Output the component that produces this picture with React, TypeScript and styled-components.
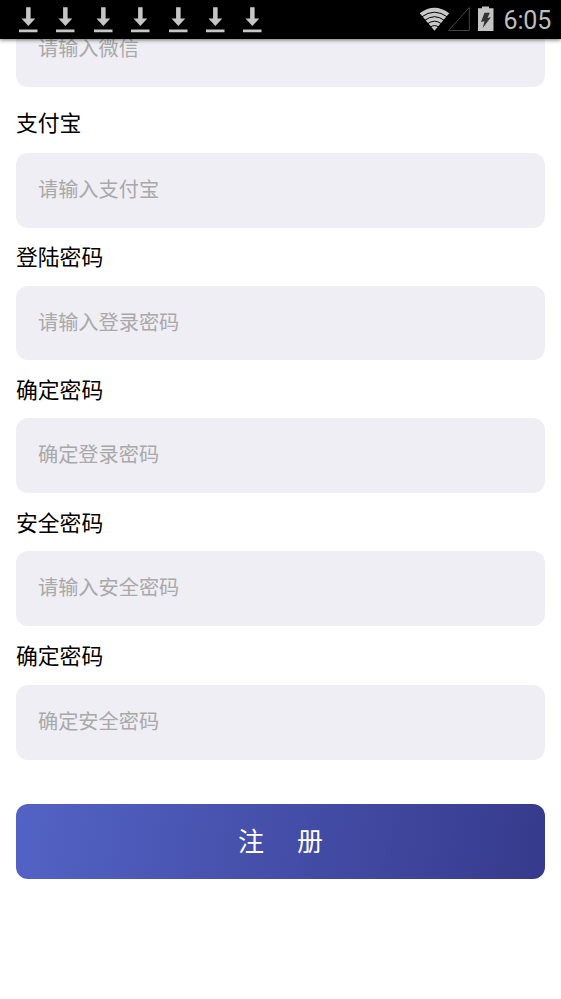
import React from "react";
import styled, { createGlobalStyle } from "styled-components";

const GlobalStyle = createGlobalStyle`
  *, *::before, *::after { box-sizing: border-box; }
  html, body { margin: 0; padding: 0; background: #fff; overflow: hidden; }
  body { font-family: Roboto, "Noto Sans CJK SC", sans-serif; }
`;

const Screen = styled.div`
  width: 561px;
  height: 999px;
  display: flex;
  flex-direction: column;
  overflow: hidden;
  background: #fff;
`;

const StatusBar = styled.header`
  flex: none;
  height: 39px;
  display: flex;
  justify-content: space-between;
  background: #000;
  color: #bebebe;
  box-shadow: 0 1px 4px rgba(0, 0, 0, 0.55);
  z-index: 1;
`;

const Downloads = styled.div`
  display: flex;
  padding: 6px 0 0 18px;
  gap: 17.4px;
`;

const DownloadIcon = styled.svg`
  display: block;
  width: 20px;
  height: 27px;
`;

const SystemIcons = styled.div`
  display: flex;
  padding-right: 10px;
`;

const StatusGlyphs = styled.svg`
  display: block;
  width: 80px;
  height: 39px;
`;

const Clock = styled.time`
  width: 51px;
  font-size: 25px;
  line-height: 41px;
  letter-spacing: -0.2px;
  text-align: right;
  white-space: nowrap;
`;

const Form = styled.main`
  flex: 1;
  min-height: 0;
  overflow: hidden;
  padding: 0 15.6px;
`;

const Field = styled.div<{ $offset?: number }>`
  margin-top: ${(p) => p.$offset ?? 0}px;
`;

const Label = styled.label<{ $height: number; $top: number }>`
  display: block;
  height: ${(p) => p.$height}px;
  padding-top: ${(p) => p.$top}px;
  padding-left: 0.4px;
  font-size: 21.8px;
  line-height: 32px;
  color: #000;
`;

const Input = styled.input`
  display: block;
  width: 100%;
  height: 74.8px;
  margin: 0;
  padding: 0 22.4px 0.6px;
  border: 0;
  border-radius: 12px;
  outline: none;
  background: #efeef4;
  font: 20.2px Roboto, "Noto Sans CJK SC", sans-serif;
  &::placeholder { color: #a9a9a9; opacity: 1; }
`;

const Submit = styled.button`
  display: block;
  width: 100%;
  height: 74.8px;
  margin: 44px 0 0;
  padding: 0 0 3px;
  border: 0;
  border-radius: 12px;
  background: linear-gradient(100deg, #5363c5, #363a8c);
  color: #fff;
  font: 26px Roboto, "Noto Sans CJK SC", sans-serif;
  white-space: pre;
  word-spacing: 4.6px;
`;

const fields = [
  { label: "支付宝", hint: "请输入支付宝", height: 66, top: 21.4 },
  { label: "登陆密码", hint: "请输入登录密码", height: 57.9, top: 14.4 },
  { label: "确定密码", hint: "确定登录密码", height: 57.9, top: 14.8 },
  { label: "安全密码", hint: "请输入安全密码", height: 57.9, top: 14.8 },
  { label: "确定密码", hint: "确定安全密码", height: 59.2, top: 14.8 },
];

export default function App() {
  return (
    <>
      <GlobalStyle />
      <Screen>
        <StatusBar>
          <Downloads>
            {Array.from({ length: 7 }, (_, i) => (
              <DownloadIcon key={i} viewBox="0 0 20 27" fill="#c6c6c6">
                <path d="M8.100 1.300h4.500v11.200h4.700L10.350 20 3.500 12.500h4.600zM1 23.600h18.500v2.600H1z" />
              </DownloadIcon>
            ))}
          </Downloads>
          <SystemIcons>
            <StatusGlyphs viewBox="420 0 80 39">
              <path d="M419.700 13.200q14.800-11 29.500 0L434.500 30.700z" fill="#c8c8c8" />
              <g fill="none" stroke="#000" strokeWidth="1">
                <path d="M421.500 17q13-9.600 26 0M424.500 20.500q10-7.600 20 0M427.300 23.900q7.200-5.400 14.400 0M430 27.200q4.500-3.200 9 0" />
              </g>
              <path d="M448.500 30.500h20.800V7.500z" fill="none" stroke="#444" strokeWidth="1" />
              <path d="M478 8.200h4V6.500h7v1.700h4.500V31H478z" fill="#c4c4c4" />
              <path d="M484.500 12.700h5.300l-2.300 5.200 3.500-.6-8.300 10.700 1.700-6.700-3.400.6z" fill="#333" />
            </StatusGlyphs>
            <Clock>6:05</Clock>
          </SystemIcons>
        </StatusBar>
        <Form>
          <Field $offset={-26.8}>
            <Input placeholder="请输入微信" />
          </Field>
          {fields.map((f, i) => (
            <Field key={i}>
              <Label $height={f.height} $top={f.top}>{f.label}</Label>
              <Input placeholder={f.hint} />
            </Field>
          ))}
          <Submit>注   册</Submit>
        </Form>
      </Screen>
    </>
  );
}
